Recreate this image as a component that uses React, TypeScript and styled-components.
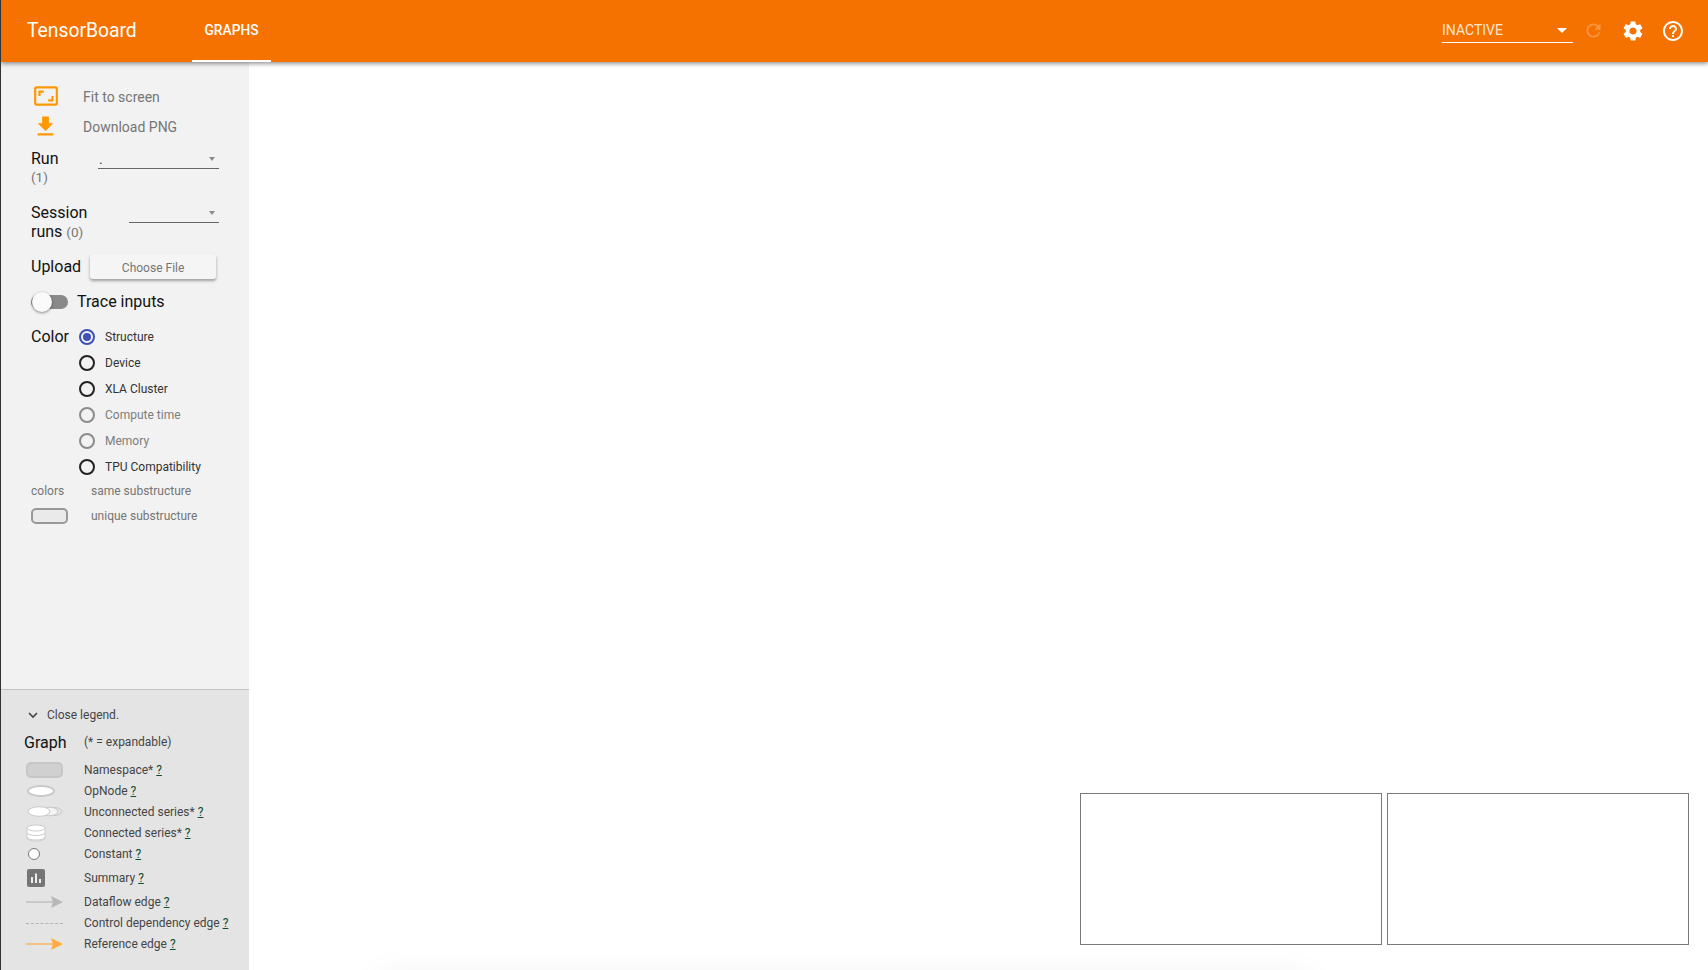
import React from "react";
import styled, { createGlobalStyle } from "styled-components";

const Global = createGlobalStyle`
  html, body { margin: 0; padding: 0; height: 100%; background: #fff; }
  body { font-family: Roboto, "Liberation Sans", sans-serif; overflow: hidden; }
  #root { height: 100%; }
  * { box-sizing: border-box; }
`;

const Page = styled.div`
  height: 970px;
  display: flex;
  flex-direction: column;
  position: relative;
  overflow: hidden;
  border-left: 1px solid #333;
`;
const Header = styled.header`
  height: 62px;
  flex: none;
  background: #f67200;
  color: #fff;
  display: flex;
  align-items: center;
  padding-left: 26px;
  box-shadow: 0 2px 4px rgba(0, 0, 0, 0.4);
  position: relative;
  z-index: 2;
`;
const Brand = styled.div`
  font-size: 19.3px;
  width: 165px;
  margin-top: -2px;
`;
const Tab = styled.div`
  height: 62px;
  width: 79px;
  display: flex;
  align-items: center;
  justify-content: center;
  font-size: 13.8px;
  font-weight: 500;
  padding-bottom: 1px;
  border-bottom: 2px solid #fff;
`;
const HeaderRight = styled.div`
  margin-left: auto;
  margin-top: -1px;
  display: flex;
  align-items: center;
  padding-right: 23px;
`;
const RunSelect = styled.div`
  width: 131px;
  height: 24px;
  border-bottom: 1px solid #fff;
  display: flex;
  align-items: center;
  justify-content: space-between;
  font-size: 14px;
  color: #ffe6d0;
  padding-right: 6px;
`;
const WhiteCaret = styled.span`
  width: 0;
  height: 0;
  border-left: 5px solid transparent;
  border-right: 5px solid transparent;
  border-top: 5px solid #fff;
`;
const IconSlot = styled.span<{ $ml: number; $faded?: boolean }>`
  display: inline-flex;
  margin-left: ${(p) => p.$ml}px;
  opacity: ${(p) => (p.$faded ? 0.25 : 1)};
`;

const Body = styled.div`
  flex: 1;
  min-height: 0;
  display: flex;
`;
const Sidebar = styled.aside`
  width: 248px;
  flex: none;
  background: #f2f2f2;
  display: flex;
  flex-direction: column;
`;
const Controls = styled.div`
  flex: 1;
  padding: 20px 30px 0 30px;
`;
const ActionRow = styled.div<{ $h: number }>`
  height: ${(p) => p.$h}px;
  display: flex;
  align-items: center;
  font-size: 14px;
  color: #757575;
`;
const ActionIcon = styled.span<{ $lift?: number }>`
  width: 52px;
  display: flex;
  justify-content: center;
  padding-right: 23px;
  margin-bottom: ${(p) => p.$lift ?? 0}px;
  flex: none;
`;
const FieldRow = styled.div<{ $h: number; $mt?: number }>`
  height: ${(p) => p.$h}px;
  margin-top: ${(p) => p.$mt ?? 0}px;
  display: flex;
  justify-content: space-between;
`;
const FieldLabel = styled.div`
  font-size: 16px;
  line-height: 19px;
  color: #111;
`;
const Count = styled.span<{ $block?: boolean }>`
  display: ${(p) => (p.$block ? "block" : "inline")};
  font-size: 13.5px;
  color: #757575;
`;
const Select = styled.div<{ $w: number }>`
  width: ${(p) => p.$w}px;
  height: 20px;
  border-bottom: 1px solid #666;
  display: flex;
  justify-content: space-between;
  align-items: center;
  font-size: 14px;
  color: #444;
  padding: 0 4px 0 1px;
`;
const GrayCaret = styled.span`
  width: 0;
  height: 0;
  border-left: 3.5px solid transparent;
  border-right: 3.5px solid transparent;
  border-top: 4px solid #8a8a8a;
  margin-top: 1px;
`;
const UploadRow = styled.div`
  height: 29px;
  display: flex;
  align-items: center;
  gap: 9px;
`;
const ChooseFile = styled.div`
  width: 126px;
  height: 25px;
  background: #f5f5f5;
  border-radius: 3px;
  box-shadow: 0 2px 3px rgba(0, 0, 0, 0.35);
  font-size: 12px;
  color: #757575;
  display: flex;
  align-items: center;
  justify-content: center;
  padding-top: 2px;
`;
const ToggleRow = styled.div`
  height: 33px;
  margin-top: 4px;
  display: flex;
  align-items: center;
  font-size: 16px;
  color: #111;
`;
const Toggle = styled.span`
  position: relative;
  width: 37px;
  height: 14px;
  border-radius: 7px;
  background: #8a8a8a;
  margin-right: 9px;
  flex: none;
`;
const Knob = styled.span`
  position: absolute;
  left: 1px;
  top: -3px;
  width: 20px;
  height: 20px;
  border-radius: 50%;
  background: #fafafa;
  box-shadow: 0 1px 3px rgba(0, 0, 0, 0.45);
`;
const ColorSection = styled.div`
  display: flex;
  margin-top: 6px;
`;
const ColorLabel = styled.div`
  font-size: 16px;
  line-height: 26px;
  width: 48px;
  color: #111;
`;
const RadioList = styled.div`
  display: flex;
  flex-direction: column;
`;
const RadioRow = styled.div<{ $muted?: boolean }>`
  height: 26px;
  display: flex;
  align-items: center;
  gap: 10px;
  font-size: 12px;
  color: ${(p) => (p.$muted ? "#7d7d7d" : "#333")};
`;
const Radio = styled.span<{ $state: "on" | "off" | "muted" }>`
  width: 16px;
  height: 16px;
  border-radius: 50%;
  flex: none;
  display: flex;
  align-items: center;
  justify-content: center;
  border: 2px solid
    ${(p) => (p.$state === "on" ? "#3f51b5" : p.$state === "muted" ? "#8c8c8c" : "#222")};
`;
const RadioDot = styled.span`
  width: 8px;
  height: 8px;
  border-radius: 50%;
  background: #3f51b5;
`;
const KeyRow = styled.div<{ $mt: number }>`
  height: 18px;
  margin-top: ${(p) => p.$mt}px;
  display: flex;
  align-items: center;
  font-size: 12px;
  color: #757575;
`;
const KeySwatchCell = styled.span`
  width: 60px;
  flex: none;
  display: flex;
  align-items: center;
`;
const KeySwatch = styled.span`
  width: 37px;
  height: 16px;
  border-radius: 5px;
  border: 2px solid #999;
  background: #eaeaea;
`;

const Legend = styled.section`
  flex: none;
  height: 281px;
  background: #e4e4e4;
  border-top: 1px solid #c4c4c4;
  padding: 16px 0 0 23px;
`;
const CloseRow = styled.div`
  height: 18px;
  display: flex;
  align-items: center;
  font-size: 12px;
  color: #444;
`;
const Chevron = styled.span`
  width: 23px;
  display: flex;
  padding-left: 4px;
  flex: none;
`;
const GraphRow = styled.div`
  height: 26px;
  margin: 5px 0 4px;
  display: flex;
  align-items: center;
`;
const GraphTitle = styled.span`
  width: 60px;
  font-size: 16px;
  color: #111;
`;
const LegendText = styled.span`
  font-size: 12px;
  color: #444;
`;
const LegendRow = styled.div<{ $h: number }>`
  height: ${(p) => p.$h}px;
  display: flex;
  align-items: center;
`;
const LegendIcon = styled.span<{ $pl: number }>`
  width: 60px;
  flex: none;
  display: flex;
  align-items: center;
  padding-left: ${(p) => p.$pl}px;
`;
const Help = styled.a`
  color: #0d4f2c;
  text-decoration: underline;
`;

const Canvas = styled.main`
  flex: 1;
  position: relative;
  background: #fff;
`;
const Minimap = styled.div`
  position: absolute;
  right: 19px;
  bottom: 25px;
  display: flex;
  gap: 5px;
`;
const MiniBox = styled.div`
  width: 302px;
  height: 152px;
  border: 1px solid #7a7a7a;
  background: #fff;
`;
const BottomGlow = styled.div`
  position: absolute;
  left: 130px;
  right: 400px;
  bottom: -24px;
  height: 10px;
  box-shadow: 0 0 36px rgba(0, 0, 0, 0.16);
`;

const GEAR =
  "M19.14 12.94c.04-.3.06-.61.06-.94 0-.32-.02-.64-.07-.94l2.03-1.58c.18-.14.23-.41.12-.61l-1.92-3.32c-.12-.22-.37-.29-.59-.22l-2.39.96c-.5-.38-1.03-.7-1.62-.94l-.36-2.54c-.04-.24-.24-.41-.48-.41h-3.84c-.24 0-.43.17-.47.41l-.36 2.54c-.59.24-1.13.57-1.62.94l-2.39-.96c-.22-.08-.47 0-.59.22L2.74 8.87c-.12.21-.08.47.12.61l2.03 1.58c-.05.3-.09.63-.09.94s.02.64.07.94l-2.03 1.58c-.18.14-.23.41-.12.61l1.92 3.32c.12.22.37.29.59.22l2.39-.96c.5.38 1.03.7 1.62.94l.36 2.54c.05.24.24.41.48.41h3.84c.24 0 .44-.17.47-.41l.36-2.54c.59-.24 1.13-.56 1.62-.94l2.39.96c.22.08.47 0 .59-.22l1.92-3.32c.12-.22.07-.47-.12-.61l-2.01-1.58zM12 15.6c-1.98 0-3.6-1.62-3.6-3.6s1.62-3.6 3.6-3.6 3.6 1.62 3.6 3.6-1.62 3.6-3.6 3.6z";
const HELP =
  "M11 18h2v-2h-2v2zm1-16C6.48 2 2 6.48 2 12s4.48 10 10 10 10-4.48 10-10S17.52 2 12 2zm0 18c-4.41 0-8-3.59-8-8s3.59-8 8-8 8 3.59 8 8-3.59 8-8 8zm0-14c-2.21 0-4 1.79-4 4h2c0-1.1.9-2 2-2s2 .9 2 2c0 2-3 1.75-3 5h2c0-2.25 3-2.5 3-5 0-2.21-1.79-4-4-4z";
const REFRESH =
  "M17.65 6.35C16.2 4.9 14.21 4 12 4c-4.42 0-7.99 3.58-7.99 8s3.57 8 7.99 8c3.73 0 6.84-2.55 7.73-6h-2.08c-.82 2.33-3.04 4-5.65 4-3.31 0-6-2.69-6-6s2.69-6 6-6c1.66 0 3.14.69 4.22 1.78L13 11h7V4l-2.35 2.35z";
const FIT =
  "M19 12h-2v3h-3v2h5v-5zM7 9h3V7H5v5h2V9zm14-6H3c-1.1 0-2 .9-2 2v14c0 1.1.9 2 2 2h18c1.1 0 2-.9 2-2V5c0-1.1-.9-2-2-2zm0 16.01H3V4.99h18v14.02z";
const DOWNLOAD = "M19 9h-4V3H9v6H5l7 7 7-7zM5 18v2h14v-2H5z";

const MdIcon = ({ d, size, color }: { d: string; size: number; color: string }) => (
  <svg width={size} height={size} viewBox="0 0 24 24" fill={color}>
    <path d={d} />
  </svg>
);

const SeriesIcon = () => (
  <svg width="36" height="11" viewBox="0 0 36 11">
    <ellipse cx="27" cy="5.500" rx="8" ry="4" fill="#e4e4e4" stroke="#c8c8c8" />
    <ellipse cx="22" cy="5.500" rx="9" ry="4.300" fill="#f4f4f4" stroke="#c8c8c8" />
    <ellipse cx="12" cy="5.500" rx="11" ry="4.800" fill="#fff" stroke="#c8c8c8" />
  </svg>
);
const StackIcon = () => (
  <svg width="20" height="18" viewBox="0 0 20 18">
    <path d="M1 4v10c0 4 18 4 18 0V4" fill="#fff" stroke="#ccc" />
    <path d="M1 8.500c0 4 18 4 18 0M1 13c0 4 18 4 18 0" fill="none" stroke="#ccc" />
    <ellipse cx="10" cy="4" rx="9" ry="3" fill="#fff" stroke="#ccc" />
  </svg>
);
const SummaryIcon = () => (
  <svg width="18" height="18" viewBox="0 0 18 18">
    <rect width="18" height="18" rx="2" fill="#757575" />
    <path d="M4 8h2v6H4zM8 4.500h2V14H8zM12 10h2v4h-2z" fill="#eee" />
  </svg>
);
const Arrow = ({ color }: { color: string }) => (
  <svg width="37" height="12" viewBox="0 0 37 12">
    <path d="M0 6h27" stroke={color} strokeWidth="1.2" />
    <path d="M25 0l12 6-12 6 2-6z" fill={color} />
  </svg>
);

type Row = { icon: React.ReactNode; label: string; h: number; pl: number };

const Swatch = styled.span<{ $w: number; $h: number; $r: string; $bg: string; $bc: string; $bw: number }>`
  display: block;
  width: ${(p) => p.$w}px;
  height: ${(p) => p.$h}px;
  border-radius: ${(p) => p.$r};
  background: ${(p) => p.$bg};
  border: ${(p) => p.$bw}px solid ${(p) => p.$bc};
`;
const DashLine = styled.span`
  display: block;
  width: 37px;
  border-top: 1px dashed #b4b4b4;
`;

const rows: Row[] = [
  { icon: <Swatch $w={37} $h={16} $r="5px" $bg="#d0d0d0" $bc="#c6c6c6" $bw={2} />, label: "Namespace*", h: 21, pl: 2 },
  { icon: <Swatch $w={28} $h={12} $r="50%" $bg="#fff" $bc="#c8c8c8" $bw={2} />, label: "OpNode", h: 21, pl: 3 },
  { icon: <SeriesIcon />, label: "Unconnected series*", h: 21, pl: 3 },
  { icon: <StackIcon />, label: "Connected series*", h: 21, pl: 2 },
  { icon: <Swatch $w={12} $h={12} $r="50%" $bg="#fff" $bc="#777" $bw={1} />, label: "Constant", h: 22, pl: 4 },
  { icon: <SummaryIcon />, label: "Summary", h: 25, pl: 3 },
  { icon: <Arrow color="#b8b8b8" />, label: "Dataflow edge", h: 23, pl: 2 },
  { icon: <DashLine />, label: "Control dependency edge", h: 20, pl: 2 },
  { icon: <Arrow color="#ffab40" />, label: "Reference edge", h: 22, pl: 2 },
];

const radios: { label: string; state: "on" | "off" | "muted" }[] = [
  { label: "Structure", state: "on" },
  { label: "Device", state: "off" },
  { label: "XLA Cluster", state: "off" },
  { label: "Compute time", state: "muted" },
  { label: "Memory", state: "muted" },
  { label: "TPU Compatibility", state: "off" },
];

export default function App() {
  return (
    <>
      <Global />
      <Page>
        <Header>
          <Brand>TensorBoard</Brand>
          <Tab>GRAPHS</Tab>
          <HeaderRight>
            <RunSelect>
              INACTIVE
              <WhiteCaret />
            </RunSelect>
            <IconSlot $ml={10} $faded>
              <MdIcon d={REFRESH} size={21} color="#fff" />
            </IconSlot>
            <IconSlot $ml={17}>
              <MdIcon d={GEAR} size={24} color="#fff" />
            </IconSlot>
            <IconSlot $ml={16}>
              <MdIcon d={HELP} size={24} color="#fff" />
            </IconSlot>
          </HeaderRight>
        </Header>
        <Body>
          <Sidebar>
            <Controls>
              <ActionRow $h={30}>
                <ActionIcon $lift={2}>
                  <MdIcon d={FIT} size={26} color="#ff9800" />
                </ActionIcon>
                Fit to screen
              </ActionRow>
              <ActionRow $h={30}>
                <ActionIcon $lift={2}>
                  <MdIcon d={DOWNLOAD} size={27} color="#ff9800" />
                </ActionIcon>
                Download PNG
              </ActionRow>
              <FieldRow $h={54} $mt={7}>
                <FieldLabel>
                  Run
                  <Count $block>(1)</Count>
                </FieldLabel>
                <Select $w={121}>
                  .<GrayCaret />
                </Select>
              </FieldRow>
              <FieldRow $h={49}>
                <FieldLabel>
                  Session
                  <br />
                  runs <Count>(0)</Count>
                </FieldLabel>
                <Select $w={90}>
                  <span />
                  <GrayCaret />
                </Select>
              </FieldRow>
              <UploadRow>
                <FieldLabel>Upload</FieldLabel>
                <ChooseFile>Choose File</ChooseFile>
              </UploadRow>
              <ToggleRow>
                <Toggle>
                  <Knob />
                </Toggle>
                Trace inputs
              </ToggleRow>
              <ColorSection>
                <ColorLabel>Color</ColorLabel>
                <RadioList>
                  {radios.map((r) => (
                    <RadioRow key={r.label} $muted={r.state === "muted"}>
                      <Radio $state={r.state}>{r.state === "on" && <RadioDot />}</Radio>
                      {r.label}
                    </RadioRow>
                  ))}
                </RadioList>
              </ColorSection>
              <KeyRow $mt={2}>
                <KeySwatchCell>colors</KeySwatchCell>
                same substructure
              </KeyRow>
              <KeyRow $mt={7}>
                <KeySwatchCell>
                  <KeySwatch />
                </KeySwatchCell>
                unique substructure
              </KeyRow>
            </Controls>
            <Legend>
              <CloseRow>
                <Chevron>
                  <svg width="10" height="7" viewBox="0 0 10 7" fill="none" stroke="#444" strokeWidth="1.6">
                    <path d="M1 1l4 4 4-4" />
                  </svg>
                </Chevron>
                Close legend.
              </CloseRow>
              <GraphRow>
                <GraphTitle>Graph</GraphTitle>
                <LegendText>(* = expandable)</LegendText>
              </GraphRow>
              {rows.map((r) => (
                <LegendRow key={r.label} $h={r.h}>
                  <LegendIcon $pl={r.pl}>{r.icon}</LegendIcon>
                  <LegendText>
                    {r.label} <Help>?</Help>
                  </LegendText>
                </LegendRow>
              ))}
            </Legend>
          </Sidebar>
          <Canvas>
            <Minimap>
              <MiniBox />
              <MiniBox />
            </Minimap>
            <BottomGlow />
          </Canvas>
        </Body>
      </Page>
    </>
  );
}
